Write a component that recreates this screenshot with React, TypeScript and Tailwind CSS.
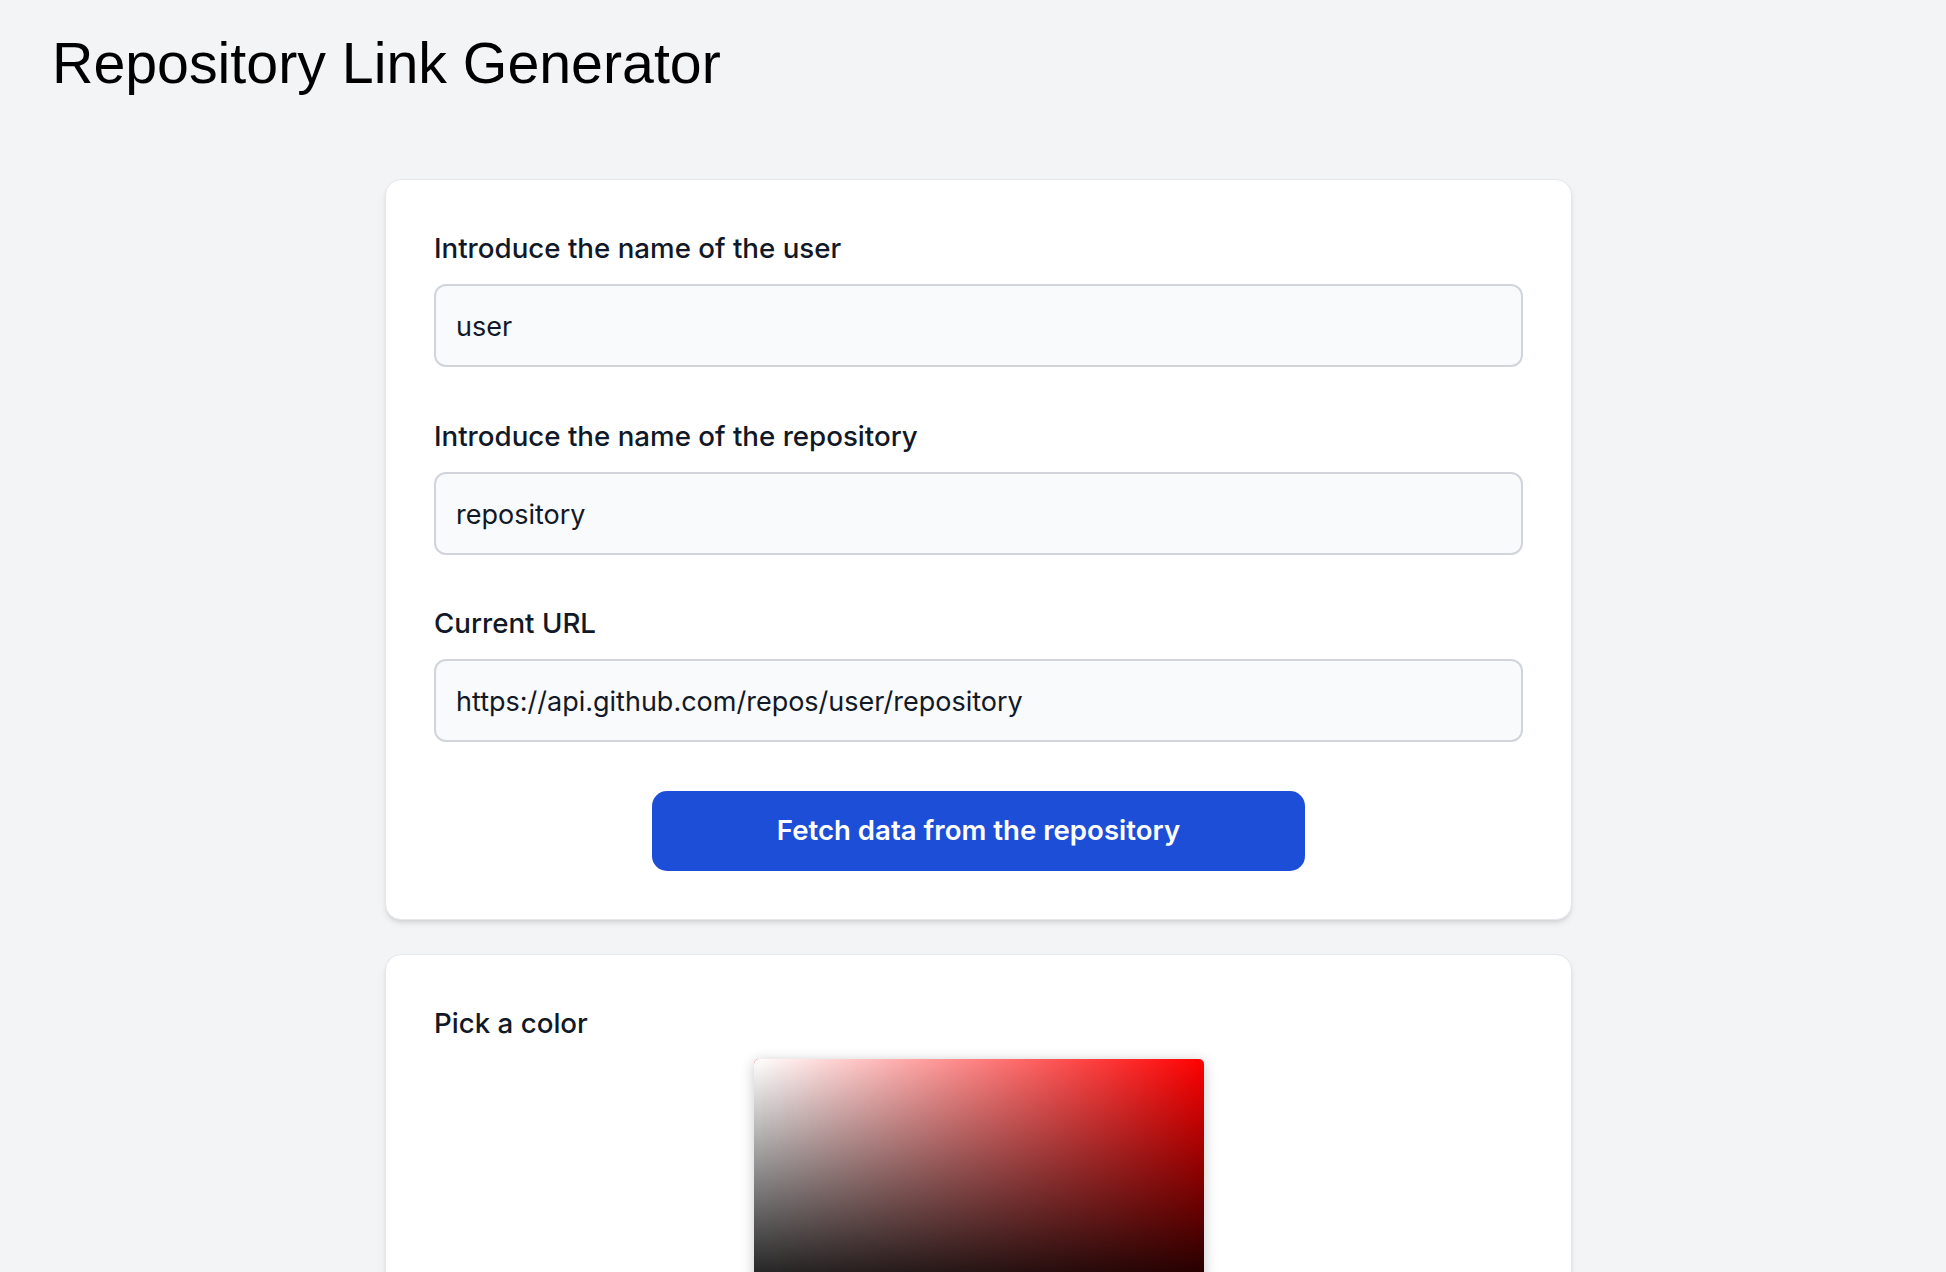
import React from "react";

const labelCls =
  "block text-[27.7px] leading-[40px] font-medium text-[#111827] [font-family:Inter,'Noto_Sans',sans-serif]";
const inputCls =
  "mt-[16px] w-full h-[83px] rounded-[12px] border-2 border-[#d1d5db] bg-[#f9fafb] px-[20px] pt-[2px] text-[27px] text-[#111827] outline-none [font-family:Inter,'Noto_Sans',sans-serif]";

function Field({ label, value }: { label: string; value: string }) {
  return (
    <div>
      <label className={labelCls}>{label}</label>
      <input className={inputCls} defaultValue={value} readOnly />
    </div>
  );
}

export default function App() {
  return (
    <div className="min-h-screen bg-[#f3f4f6] pb-[60px]">
      <h1 className="pl-[52px] pt-[35px] text-[57.3px] leading-[57px] font-normal text-black [font-family:'Liberation_Sans',Arial,sans-serif]">
        Repository Link Generator
      </h1>
      <div className="mt-[87px] flex flex-col items-center pl-[11px]">
        <div className="w-[1187px] rounded-[16px] border border-[#e5e7eb] bg-white p-[48px] shadow-md">
          <div className="flex flex-col gap-[48.5px]">
            <Field label="Introduce the name of the user" value="user" />
            <Field label="Introduce the name of the repository" value="repository" />
            <Field
              label="Current URL"
              value="https://api.github.com/repos/user/repository"
            />
          </div>
          <div className="mt-[49px] flex justify-center">
            <button className="w-3/5 h-[80px] rounded-[15px] bg-[#1d4ed8] text-white text-[27.6px] font-semibold [font-family:Inter,'Noto_Sans',sans-serif]">
              Fetch data from the repository
            </button>
          </div>
        </div>
        <div className="mt-[34px] w-[1187px] rounded-[16px] border border-[#e5e7eb] bg-white p-[48px] shadow-md">
          <label className={labelCls}>Pick a color</label>
          <div className="mt-[16px] flex justify-center">
            <div className="relative w-[450px] h-[252px] rounded-[5px] bg-[#ff0000] shadow-[0_2px_14px_rgba(0,0,0,0.22)] overflow-hidden">
              <div className="absolute inset-0 bg-gradient-to-r from-white to-transparent" />
              <div className="absolute inset-0 bg-gradient-to-t from-black to-transparent" />
            </div>
          </div>
        </div>
      </div>
    </div>
  );
}
